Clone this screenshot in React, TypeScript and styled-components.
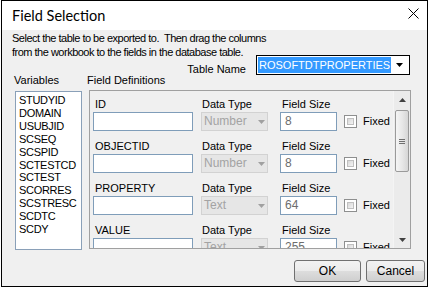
import styled, { createGlobalStyle } from 'styled-components';

const VARIABLES = [
  'STUDYID',
  'DOMAIN',
  'USUBJID',
  'SCSEQ',
  'SCSPID',
  'SCTESTCD',
  'SCTEST',
  'SCORRES',
  'SCSTRESC',
  'SCDTC',
  'SCDY',
];

const FIELDS = [
  { name: 'ID', type: 'Number', size: '8' },
  { name: 'OBJECTID', type: 'Number', size: '8' },
  { name: 'PROPERTY', type: 'Text', size: '64' },
  { name: 'VALUE', type: 'Text', size: '255' },
];

const GlobalStyle = createGlobalStyle`
  html, body {
    margin: 0;
    padding: 0;
    background: #ffffff;
  }
  body {
    font-family: 'Liberation Sans', Arial, sans-serif;
    font-size: 11px;
    color: #000;
  }
  * {
    box-sizing: border-box;
  }
`;

const Window = styled.div`
  margin-left: 1px;
  width: 427px;
  height: 287px;
  border: 1px solid #000;
  display: flex;
  flex-direction: column;
  background: #f0f0f0;
  overflow: hidden;
`;

const TitleBar = styled.div`
  height: 29px;
  flex: none;
  background: #fff;
  display: flex;
  align-items: center;
  justify-content: space-between;
  padding: 0 8px 0 10px;
`;

const Title = styled.span`
  font-family: Lato, 'Liberation Sans', sans-serif;
  font-size: 14.5px;
  color: #000;
`;

const CloseIcon = styled.svg`
  width: 11px;
  height: 11px;
  margin-bottom: 5px;
`;

const Body = styled.div`
  flex: 1;
  display: flex;
  flex-direction: column;
  padding: 1px 0 0 10px;
`;

const Instructions = styled.div`
  line-height: 14px;
  letter-spacing: -0.5px;
`;

const TableRow = styled.div`
  display: flex;
  justify-content: flex-end;
  align-items: flex-end;
  gap: 10px;
  margin-top: -4px;
  padding-right: 17px;
`;

const TableLabel = styled.span`
  line-height: 13px;
  margin-bottom: -1px;
`;

const TableSelect = styled.div`
  width: 154px;
  height: 20px;
  border: 1px solid #000;
  background: #fff;
  display: flex;
  align-items: center;
  padding: 1px;
`;

const Highlight = styled.span`
  background: #3399ff;
  color: #fff;
  height: 16px;
  line-height: 16px;
  padding: 0 1px;
`;

const ArrowBox = styled.span`
  margin-left: auto;
  width: 17px;
  display: flex;
  justify-content: center;
`;

const LabelsRow = styled.div`
  display: flex;
  margin-top: -1px;
  line-height: 13px;
`;

const ColumnLabel = styled.span<{ $width?: number; $indent?: number }>`
  width: ${({ $width }) => ($width ? `${$width}px` : 'auto')};
  margin-left: ${({ $indent }) => $indent ?? 0}px;
`;

const Main = styled.div`
  display: flex;
  align-items: flex-start;
  margin-top: 3px;
`;

const VarList = styled.div`
  margin: 1px 0 0 3px;
  width: 67px;
  height: 159px;
  border: 1px solid #8aa0b8;
  background: #fff;
  padding: 2px 0 0 3px;
  line-height: 12.9px;
  letter-spacing: -0.3px;
`;

const Panel = styled.div`
  margin-left: 7px;
  width: 322px;
  height: 159px;
  border: 1px solid #a0a0a0;
  display: flex;
`;

const Defs = styled.div`
  flex: 1;
  overflow: hidden;
  padding: 7px 0 0 3px;
`;

const FieldRow = styled.div`
  display: grid;
  grid-template-columns: 108px 79px 64px auto;
  grid-template-rows: 13px 19px;
  row-gap: 1px;
  margin-bottom: 9px;
  align-items: center;
  line-height: 13px;
`;

const FieldLabel = styled.span<{ $indent: number }>`
  padding-left: ${({ $indent }) => $indent}px;
`;

const TextBox = styled.div<{ $width: number }>`
  width: ${({ $width }) => $width}px;
  height: 19px;
  border: 1px solid #7f9db9;
  background: #fff;
  color: #6d6d6d;
  font-size: 12px;
  line-height: 17px;
  padding-left: 4px;
`;

const TypeSelect = styled.div`
  width: 67px;
  height: 19px;
  border: 1px solid #d2d2d2;
  background: #e6e6e6;
  color: #a3a3a3;
  font-size: 12px;
  display: flex;
  align-items: center;
  padding: 0 1px 0 2px;
  justify-content: space-between;
`;

const CheckCell = styled.div`
  display: flex;
  align-items: center;
  gap: 6px;
`;

const CheckBox = styled.span`
  width: 13px;
  height: 13px;
  border: 1px solid #8e8f8f;
  background: #fff;
  padding: 2px;
  display: flex;

  &::after {
    content: '';
    flex: 1;
    background: linear-gradient(135deg, #d8d8d8, #f4f4f4);
    border: 1px solid #c0c0c0;
  }
`;

const ScrollBar = styled.div`
  width: 17px;
  flex: none;
  display: flex;
  flex-direction: column;
  background: #ebebeb;
  border-left: 1px solid #f4f4f4;
`;

const ScrollButton = styled.div`
  height: 17px;
  display: flex;
  align-items: center;
  justify-content: center;
`;

const Thumb = styled.div`
  margin: 2px 1px 0 1px;
  height: 62px;
  border: 1px solid #9a9a9a;
  border-radius: 2px;
  background: linear-gradient(90deg, #f5f5f5 0%, #e8e8e8 50%, #d6d6d6 100%);
  display: flex;
  flex-direction: column;
  align-items: center;
  justify-content: center;
  gap: 1px;
`;

const Grip = styled.span`
  width: 6px;
  height: 1px;
  background: #6f6f6f;
`;

const Track = styled.div`
  flex: 1;
`;

const ButtonRow = styled.div`
  display: flex;
  justify-content: flex-end;
  gap: 5px;
  margin-top: 10px;
  padding-right: 2px;
`;

const Button = styled.button<{ $width: number }>`
  width: ${({ $width }) => $width}px;
  height: 22px;
  border: 1px solid #707070;
  border-radius: 3px;
  background: linear-gradient(#f2f2f2 0%, #ebebeb 50%, #dddddd 51%, #cfcfcf 100%);
  font-family: 'Liberation Sans', Arial, sans-serif;
  font-size: 12px;
  color: #000;
  padding: 0;
`;

const Triangle = ({ up = false, color = '#000', w = 7 }: { up?: boolean; color?: string; w?: number }) => (
  <svg width={w} height={4} viewBox="0 0 7 4">
    <polygon points={up ? '0,4 7,4 3.5,0' : '0,0 7,0 3.5,4'} fill={color} />
  </svg>
);

export default function App() {
  return (
    <>
      <GlobalStyle />
      <Window>
        <TitleBar>
          <Title>Field Selection</Title>
          <CloseIcon viewBox="0 0 11 11">
            <path d="M0.5 0.5 L10.5 10.5 M10.5 0.5 L0.5 10.5" stroke="#000" strokeWidth="1" />
          </CloseIcon>
        </TitleBar>
        <Body>
          <Instructions>
            Select the table to be exported to.&nbsp; Then drag the columns
            <br />
            from the workbook to the fields in the database table.
          </Instructions>
          <TableRow>
            <TableLabel>Table Name</TableLabel>
            <TableSelect>
              <Highlight>ROSOFTDTPROPERTIES</Highlight>
              <ArrowBox>
                <Triangle />
              </ArrowBox>
            </TableSelect>
          </TableRow>
          <LabelsRow>
            <ColumnLabel $width={73} $indent={2}>
              Variables
            </ColumnLabel>
            <ColumnLabel>Field Definitions</ColumnLabel>
          </LabelsRow>
          <Main>
            <VarList>
              {VARIABLES.map((v) => (
                <div key={v}>{v}</div>
              ))}
            </VarList>
            <Panel>
              <Defs>
                {FIELDS.map((f) => (
                  <FieldRow key={f.name}>
                    <FieldLabel $indent={2}>{f.name}</FieldLabel>
                    <FieldLabel $indent={1}>Data Type</FieldLabel>
                    <FieldLabel $indent={2}>Field Size</FieldLabel>
                    <span />
                    <TextBox $width={100} />
                    <TypeSelect>
                      {f.type}
                      <Triangle color="#a0a0a0" w={9} />
                    </TypeSelect>
                    <TextBox $width={57}>{f.size}</TextBox>
                    <CheckCell>
                      <CheckBox />
                      Fixed
                    </CheckCell>
                  </FieldRow>
                ))}
              </Defs>
              <ScrollBar>
                <ScrollButton>
                  <Triangle up color="#404040" />
                </ScrollButton>
                <Thumb>
                  <Grip />
                  <Grip />
                  <Grip />
                </Thumb>
                <Track />
                <ScrollButton>
                  <Triangle color="#404040" />
                </ScrollButton>
              </ScrollBar>
            </Panel>
          </Main>
          <ButtonRow>
            <Button $width={67}>OK</Button>
            <Button $width={59}>Cancel</Button>
          </ButtonRow>
        </Body>
      </Window>
    </>
  );
}
